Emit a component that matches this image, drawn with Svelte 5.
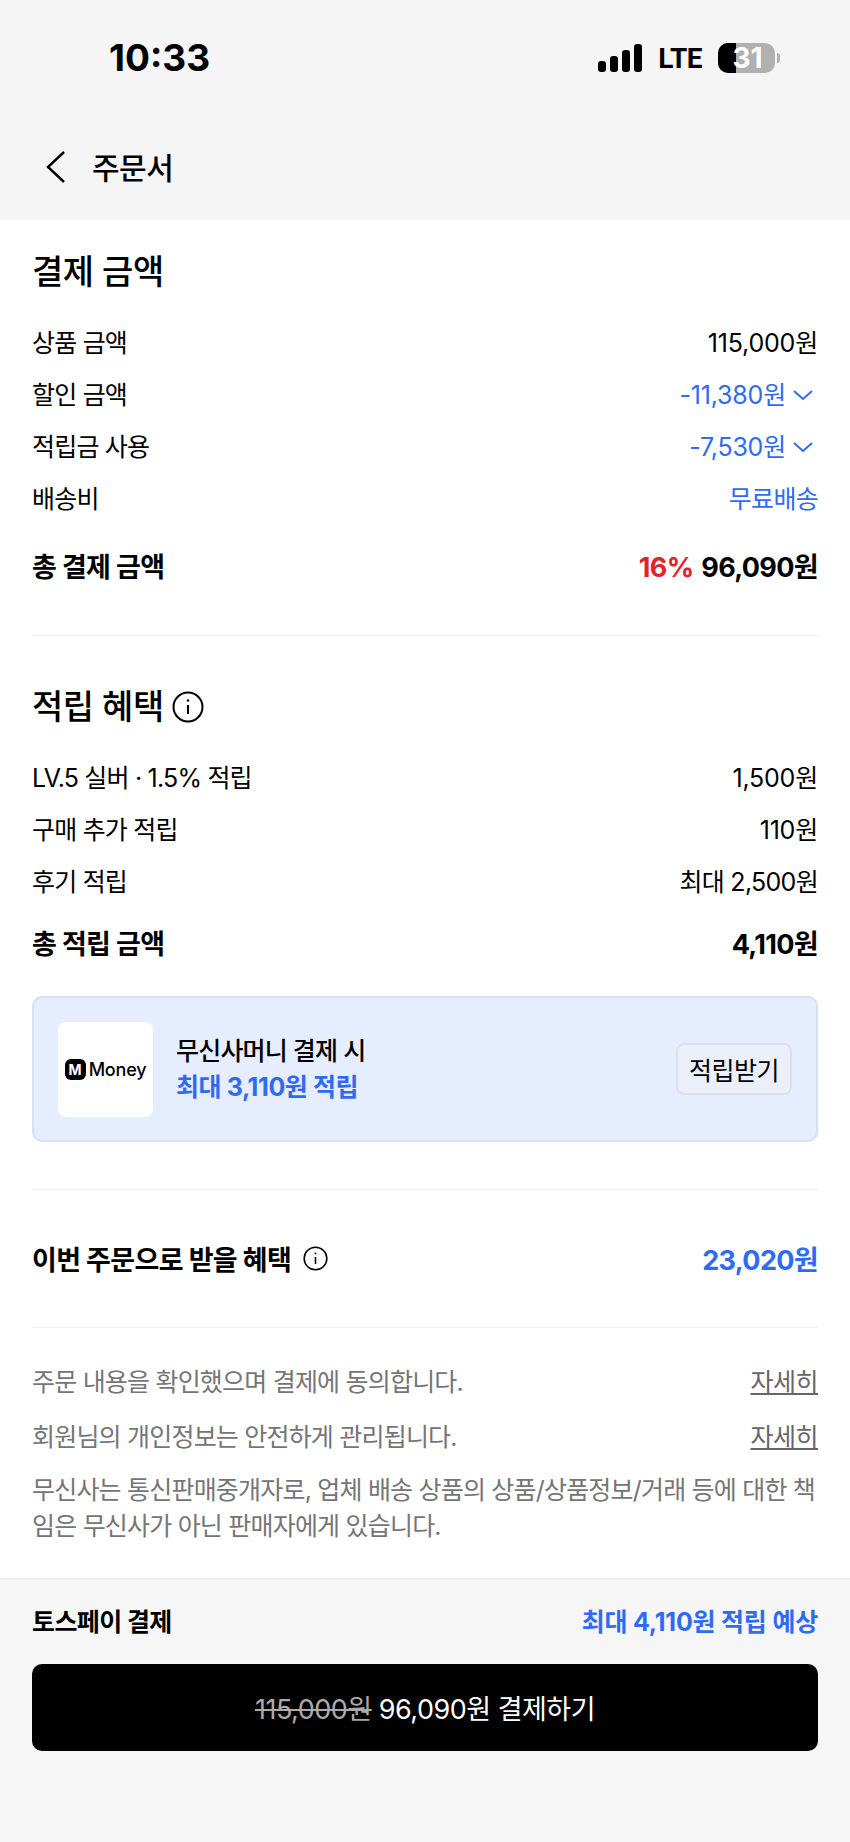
<script>
  const priceRows = [
    { label: '상품 금액', value: '115,000원' },
    { label: '할인 금액', value: '-11,380원', blue: true, more: true },
    { label: '적립금 사용', value: '-7,530원', blue: true, more: true },
    { label: '배송비', value: '무료배송', blue: true, tight: true }
  ];

  const pointRows = [
    { label: 'LV.5 실버 · 1.5% 적립', value: '1,500원' },
    { label: '구매 추가 적립', value: '110원' },
    { label: '후기 적립', value: '최대 2,500원', tight: true }
  ];
</script>

{#snippet info(size)}
  <svg class="info" width={size} height={size} viewBox="0 0 32 32" fill="none" stroke="#000" stroke-width="2">
    <circle cx="16" cy="16" r="14.5" />
    <path d="M16 14v9" />
    <circle cx="16" cy="9.5" r="1.2" fill="#000" stroke="none" />
  </svg>
{/snippet}

<div class="page">
  <header class="top">
    <div class="status">
      <span class="time">10:33</span>
      <div class="status-right">
        <svg width="45" height="28" viewBox="0 0 45 28" fill="#000">
          <rect x="0" y="17" width="8" height="11" rx="3" />
          <rect x="12" y="12" width="8" height="16" rx="3" />
          <rect x="24" y="6" width="8" height="22" rx="3" />
          <rect x="36" y="0" width="8" height="28" rx="3" />
        </svg>
        <span class="lte">LTE</span>
        <div class="battery">
          <div class="battery-level"></div>
          <span class="battery-num">31</span>
        </div>
        <div class="battery-cap"></div>
      </div>
    </div>
    <div class="nav">
      <svg width="22" height="34" viewBox="0 0 22 34" fill="none" stroke="#000" stroke-width="2.4">
        <path d="M20 2 4 17l16 15" />
      </svg>
      <h1>주문서</h1>
    </div>
  </header>

  <main>
    <section class="price">
      <h2>결제 금액</h2>
      <div class="rows">
        {#each priceRows as row}
          <div class="row">
            <span>{row.label}</span>
            <span class="value" class:blue={row.blue} class:tight={row.tight}>
              {row.value}
              {#if row.more}
                <svg class="more" width="22" height="12" viewBox="0 0 22 12" fill="none" stroke="#2f6bf2" stroke-width="2">
                  <path d="M2 2l9 8 9-8" />
                </svg>
              {/if}
            </span>
          </div>
        {/each}
      </div>
      <div class="row total">
        <span>총 결제 금액</span>
        <span><em>16%</em> 96,090원</span>
      </div>
    </section>

    <section class="points">
      <h2>적립 혜택 {@render info(32)}</h2>
      <div class="rows">
        {#each pointRows as row}
          <div class="row">
            <span>{row.label}</span>
            <span class="value" class:tight={row.tight}>{row.value}</span>
          </div>
        {/each}
      </div>
      <div class="row total">
        <span>총 적립 금액</span>
        <span>4,110원</span>
      </div>
      <div class="money-card">
        <div class="money-logo">
          <span class="m">M</span>
          <span class="money-name">Money</span>
        </div>
        <div class="money-text">
          <strong>무신사머니 결제 시</strong>
          <span>최대 3,110원 적립</span>
        </div>
        <button type="button">적립받기</button>
      </div>
    </section>

    <section class="benefit">
      <span class="benefit-label">이번 주문으로 받을 혜택 {@render info(25)}</span>
      <span class="benefit-value">23,020원</span>
    </section>

    <section class="notes">
      <div class="note"><span>주문 내용을 확인했으며 결제에 동의합니다.</span><a href="#terms">자세히</a></div>
      <div class="note"><span>회원님의 개인정보는 안전하게 관리됩니다.</span><a href="#privacy">자세히</a></div>
      <p>무신사는 통신판매중개자로, 업체 배송 상품의 상품/상품정보/거래 등에 대한 책임은 무신사가 아닌 판매자에게 있습니다.</p>
    </section>
  </main>

  <footer>
    <div class="pay-info">
      <strong>토스페이 결제</strong>
      <span>최대 4,110원 적립 예상</span>
    </div>
    <button type="button" class="pay"><s>115,000원</s> 96,090원 결제하기</button>
  </footer>
</div>

<style>
  :global(body) {
    margin: 0;
    background: #f6f6f6;
  }

  .page {
    font-family: Inter, "Noto Sans CJK KR", sans-serif;
    color: #000;
    font-size: 25px;
    letter-spacing: -0.8px;
  }

  .top {
    background: #f5f5f5;
    height: 220px;
    box-sizing: border-box;
  }

  .status {
    height: 116px;
    display: flex;
    justify-content: space-between;
    align-items: flex-start;
    padding: 38px 70px 0 109px;
    box-sizing: border-box;
  }

  .time {
    font-size: 37px;
    font-weight: 700;
    line-height: 40px;
    letter-spacing: 0;
  }

  .status-right {
    display: flex;
    align-items: center;
    height: 40px;
  }

  .lte {
    font-family: Roboto, sans-serif;
    font-weight: 700;
    font-size: 28px;
    letter-spacing: -0.5px;
    margin: 0 16px 0 15px;
  }

  .battery {
    position: relative;
    width: 57px;
    height: 30px;
    border-radius: 10px;
    background: #b0b0b0;
  }

  .battery-level {
    width: 18px;
    height: 100%;
    background: #000;
    border-radius: 10px 0 0 10px;
  }

  .battery-num {
    position: absolute;
    inset: 0;
    padding-left: 2px;
    text-align: center;
    color: #fff;
    font-size: 28px;
    font-weight: 700;
    line-height: 30px;
    letter-spacing: 0;
  }

  .battery-cap {
    width: 3px;
    height: 10px;
    margin-left: 2px;
    background: #b0b0b0;
    border-radius: 0 3px 3px 0;
  }

  .nav {
    display: flex;
    align-items: center;
    gap: 26px;
    height: 104px;
    padding: 0 0 4px 44px;
    box-sizing: border-box;
  }

  .nav svg {
    margin-top: 2px;
  }

  h1 {
    margin: 0;
    font-size: 30px;
    font-weight: 500;
    letter-spacing: -0.5px;
  }

  main {
    background: #fff;
    padding: 0 32px;
    height: 1358px;
    box-sizing: border-box;
  }

  section {
    border-bottom: 1px solid #eeeeee;
  }

  h2 {
    margin: 0;
    font-size: 34px;
    font-weight: 500;
    line-height: 50px;
    letter-spacing: -0.5px;
    display: flex;
    align-items: center;
    gap: 8px;
  }

  .price {
    padding: 27px 0 49px;
  }

  .rows {
    margin-top: 28px;
    display: flex;
    flex-direction: column;
    gap: 16px;
  }

  .row {
    display: flex;
    justify-content: space-between;
    align-items: center;
    line-height: 36px;
  }

  .value {
    display: flex;
    align-items: center;
    gap: 6px;
    letter-spacing: -0.2px;
  }

  .value.tight {
    letter-spacing: -0.7px;
  }

  .more {
    margin-right: 4px;
  }

  .blue {
    color: #2f6bf2;
  }

  .total {
    margin-top: 33px;
    font-weight: 700;
    font-size: 27px;
    letter-spacing: -0.65px;
  }

  em {
    font-style: normal;
    color: #e5202a;
    margin-right: 2px;
  }

  .points {
    padding: 46px 0 47px;
  }

  .points .total {
    margin-top: 27px;
  }

  .money-card {
    margin-top: 33px;
    height: 146px;
    box-sizing: border-box;
    background: #e6edfe;
    border: 2px solid #d5dffa;
    border-radius: 10px;
    display: flex;
    align-items: center;
    padding: 0 24px;
  }

  .money-logo {
    width: 95px;
    height: 95px;
    background: #fff;
    border-radius: 8px;
    display: flex;
    align-items: center;
    justify-content: center;
    gap: 3px;
    flex: none;
  }

  .m {
    width: 21px;
    height: 21px;
    background: #000;
    border-radius: 6px;
    color: #fff;
    font-size: 14px;
    font-weight: 700;
    line-height: 21px;
    text-align: center;
    letter-spacing: 0;
  }

  .money-name {
    font-size: 18px;
    font-weight: 500;
    letter-spacing: -0.2px;
  }

  .money-text {
    flex: 1;
    margin-left: 23px;
    display: flex;
    flex-direction: column;
    line-height: 36px;
  }

  .money-text strong {
    font-weight: 500;
  }

  .money-text span {
    color: #2f6bf2;
    font-weight: 700;
    letter-spacing: -0.4px;
  }

  .money-card button {
    width: 116px;
    height: 52px;
    padding: 0;
    background: #eaeff9;
    border: 2px solid #dde2ea;
    border-radius: 8px;
    font: inherit;
    color: #000;
    letter-spacing: -0.5px;
  }

  .benefit {
    height: 137px;
    display: flex;
    justify-content: space-between;
    align-items: center;
    font-weight: 700;
    font-size: 27px;
    letter-spacing: -0.65px;
  }

  .benefit-label {
    display: flex;
    align-items: center;
    gap: 12px;
  }

  .benefit-value {
    color: #2f6bf2;
  }

  .notes {
    border: 0;
    padding-top: 36px;
    color: #757575;
  }

  .note {
    display: flex;
    justify-content: space-between;
    line-height: 36px;
    margin-bottom: 19px;
  }

  .note + .note {
    margin-bottom: 17px;
  }

  .note a {
    color: #666;
    text-decoration: underline;
    letter-spacing: -0.5px;
  }

  p {
    margin: 0;
    line-height: 36px;
  }

  footer {
    border-top: 2px solid #eeeeee;
    background: #f6f6f6;
    height: 264px;
    box-sizing: border-box;
    padding: 24px 32px 0;
  }

  .pay-info {
    display: flex;
    justify-content: space-between;
    line-height: 36px;
  }

  .pay-info strong {
    font-weight: 700;
    letter-spacing: -0.6px;
  }

  .pay-info span {
    color: #2f6bf2;
    font-weight: 700;
    letter-spacing: -0.2px;
  }

  .pay {
    margin-top: 24px;
    width: 100%;
    height: 87px;
    background: #000;
    border: 0;
    border-radius: 10px;
    color: #fff;
    font: inherit;
    font-size: 27px;
    letter-spacing: -0.5px;
  }

  s {
    color: #aaa;
  }
</style>
